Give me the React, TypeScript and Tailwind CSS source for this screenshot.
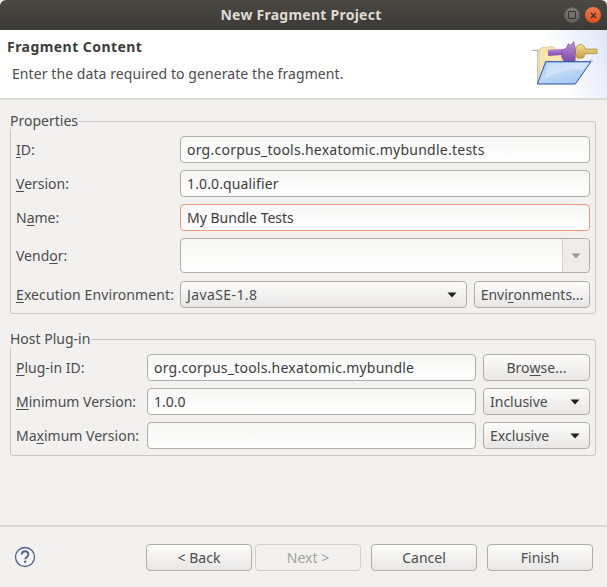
const font = "font-['Noto_Sans','Liberation_Sans',sans-serif]";

function U({ children }: { children: React.ReactNode }) {
  return <span className="underline underline-offset-2 decoration-1">{children}</span>;
}

function Label({ children, w }: { children: React.ReactNode; w: string }) {
  return <div className={`${w} shrink-0 whitespace-nowrap text-[#4c4c4c]`}>{children}</div>;
}

function Input({ value, focus, className = "" }: { value?: string; focus?: boolean; className?: string }) {
  return (
    <div
      className={`flex h-[27px] min-w-0 flex-1 items-center rounded-[4px] border bg-gradient-to-b from-[#f6f6f5] to-white px-[6px] text-[#3d3d3d] ${
        focus ? "border-[#ee9a78]" : "border-[#b0aeaa]"
      } ${className}`}
    >
      {value}
    </div>
  );
}

function Btn({ children, className = "", disabled }: { children: React.ReactNode; className?: string; disabled?: boolean }) {
  return (
    <div
      className={`flex h-[27px] items-center justify-center rounded-[4px] border ${
        disabled
          ? "border-[#d3d1ce] bg-[#f2f1f0] text-[#a3a3a1]"
          : "border-[#b0aeaa] bg-gradient-to-b from-[#fcfcfb] to-[#e8e7e5] text-[#4c4c4c]"
      } ${className}`}
    >
      {children}
    </div>
  );
}

function Caret() {
  return (
    <svg width="10" height="6" viewBox="0 0 10 6" className="shrink-0">
      <path d="M0.5 0.5h9L5 5.5z" fill="#1f1f1f" />
    </svg>
  );
}

function Combo({ text, className = "", textClass = "" }: { text: string; className?: string; textClass?: string }) {
  return (
    <Btn className={`justify-between! pl-[6px] pr-[9px] ${className}`}>
      <span className={textClass}>{text}</span>
      <Caret />
    </Btn>
  );
}

function Group({ title, className = "", children }: { title: string; className?: string; children: React.ReactNode }) {
  return (
    <div className={`relative mr-[11px] ml-[10px] rounded-[3px] border border-[#c9c7c3] px-[5px] ${className}`}>
      <div className="absolute -top-[10px] -left-[2px] bg-[#f2f1f0] px-px leading-[17px] text-[#4c4c4c]">{title}</div>
      {children}
    </div>
  );
}

function WizardIcon() {
  return (
    <svg width="82" height="65" viewBox="0 0 246 195">
      <defs>
        <linearGradient id="fb" x1="0.2" y1="0" x2="0.8" y2="1">
          <stop offset="0" stopColor="#9cc6ef" />
          <stop offset="0.45" stopColor="#c0dbf6" />
          <stop offset="1" stopColor="#9ec6ee" />
        </linearGradient>
        <linearGradient id="bk" x1="0" y1="0" x2="0" y2="1">
          <stop offset="0" stopColor="#f8e5a8" />
          <stop offset="1" stopColor="#f5e4bf" />
        </linearGradient>
        <linearGradient id="pl" x1="0" y1="0" x2="0" y2="1">
          <stop offset="0" stopColor="#bd8fd6" />
          <stop offset="1" stopColor="#7f4aa6" />
        </linearGradient>
        <linearGradient id="go" x1="0" y1="0" x2="0" y2="1">
          <stop offset="0" stopColor="#f7e3a0" />
          <stop offset="1" stopColor="#c99c3a" />
        </linearGradient>
      </defs>
      <path d="M20 46h24" stroke="#a6a6a6" strokeWidth="3" />
      <path d="M38 46v100" stroke="#b4b4b4" strokeWidth="3" />
      <path d="M42 148V50q0-10 10-12l26-3q10 0 16 8l6 8h60v30H64L42 148z" fill="url(#bk)" stroke="#d6c596" strokeWidth="2.5" />
      <path d="M68 44l44-3 4 18-46 4z" fill="url(#pl)" />
      <path d="M110 46l14-6 6-14 8 5 8-11 6 24-2 36h-32l-8-14z" fill="url(#pl)" stroke="#7f4aa6" strokeWidth="2" />
      <path d="M152 40q4-12 16-12 10 0 12 14h36v14h-36q-2 14-12 14-14 0-16-10l6-10z" fill="url(#go)" stroke="#a98a35" strokeWidth="2" />
      <path d="M62 80h136l-47 67H37z" fill="url(#fb)" stroke="#2c4fa6" strokeWidth="3" strokeLinejoin="round" />
      <path d="M66 84h122l-14 20c-38-6-84 6-112 28z" fill="#e3effb" opacity="0.55" />
      <path d="M196 74l8 6" stroke="#a6a6a6" strokeWidth="2.5" />
    </svg>
  );
}

export default function App() {
  return (
    <div className={`flex h-[587px] w-[607px] flex-col overflow-hidden bg-[#f2f1f0] text-[14px] leading-[20px] ${font}`}>
      {/* title bar */}
      <div className="relative flex h-[30px] shrink-0 items-center justify-center rounded-t-[6px] bg-gradient-to-b from-[#4a4943] to-[#3b3a36] pr-[5px] text-[14px] font-bold tracking-[0.25px] text-[#dfdbd2]">
        New Fragment Project
        <div className="absolute top-[7px] right-[6px] flex items-center gap-[5px]">
          <div className="flex h-[16px] w-[16px] items-center justify-center rounded-full border border-[#5d5c57] bg-gradient-to-b from-[#7c7b76] to-[#63625d]">
            <div className="h-[8px] w-[8px] rounded-[1px] border border-[#35342f]" />
          </div>
          <div className="flex h-[16px] w-[16px] items-center justify-center rounded-full bg-gradient-to-b from-[#f2784c] to-[#d9501f]">
            <svg width="7" height="7" viewBox="0 0 7 7">
              <path d="M1 1l5 5M6 1l-5 5" stroke="#4a2a1c" strokeWidth="1.2" />
            </svg>
          </div>
        </div>
      </div>

      {/* header banner */}
      <div className="flex h-[68px] shrink-0 justify-between bg-white">
        <div className="pt-[7px]">
          <div className="pl-[7px] leading-[20px] font-bold tracking-[0.45px] text-[#3d3d3d]">Fragment Content</div>
          <div className="pt-[7px] pl-[12px] tracking-[0.08px] text-[#4c4c4c]">Enter the data required to generate the fragment.</div>
        </div>
        <div className="w-[82px] bg-[linear-gradient(250deg,#dfe6f6_0%,#ffffff_60%)] pt-[5px]">
          <WizardIcon />
        </div>
      </div>
      <div className="h-[2px] shrink-0 bg-[#dcdad6]" />

      {/* body */}
      <div className="flex flex-1 flex-col pt-[21px]">
        <Group title="Properties" className="pt-[14px] pb-[5px]">
          <div className="flex flex-col gap-[7px]">
            <div className="flex items-center">
              <Label w="w-[164px]"><U>I</U>D:</Label>
              <Input value="org.corpus_tools.hexatomic.mybundle.tests" className="tracking-[0.25px]" />
            </div>
            <div className="flex items-center">
              <Label w="w-[164px]"><U>V</U>ersion:</Label>
              <Input value="1.0.0.qualifier" className="tracking-[0.13px]" />
            </div>
            <div className="flex items-center">
              <Label w="w-[164px]">N<U>a</U>me:</Label>
              <Input value="My Bundle Tests" focus />
            </div>
            <div className="flex items-center">
              <Label w="w-[164px]">Vend<U>o</U>r:</Label>
              <div className="mb-px flex h-[35px] flex-1 rounded-[4px] border border-[#b0aeaa] bg-gradient-to-b from-[#f6f6f5] to-white">
                <div className="flex-1" />
                <div className="flex w-[27px] items-center justify-center rounded-r-[4px] border-l border-[#d3d1ce] bg-[#eeedeb]">
                  <svg width="10" height="6" viewBox="0 0 10 6"><path d="M0.5 0.5h9L5 5.5z" fill="#9a9a98" /></svg>
                </div>
              </div>
            </div>
            <div className="flex items-center">
              <Label w="w-[164px]"><span className="tracking-[0.1px]"><U>E</U>xecution Environment:</span></Label>
              <div className="flex flex-1 gap-[7px]">
                <Combo text="JavaSE-1.8" className="flex-1" textClass="tracking-[0.4px]" />
                <Btn className="w-[116px]">Envi<U>r</U>onments...</Btn>
              </div>
            </div>
          </div>
        </Group>

        <Group title="Host Plug-in" className="mt-[25px] pt-[14px] pb-[6px]">
          <div className="flex flex-col gap-[7px]">
            <div className="flex items-center">
              <Label w="w-[131px]"><U>P</U>lug-in ID:</Label>
              <Input value="org.corpus_tools.hexatomic.mybundle" className="tracking-[0.23px]" />
              <Btn className="ml-[7px] w-[107px]">Bro<U>w</U>se...</Btn>
            </div>
            <div className="flex items-center">
              <Label w="w-[131px]"><U>M</U>inimum Version:</Label>
              <Input value="1.0.0" />
              <Combo text="Inclusive" className="ml-[7px] w-[107px]" />
            </div>
            <div className="flex items-center">
              <Label w="w-[131px]">Ma<U>x</U>imum Version:</Label>
              <Input />
              <Combo text="Exclusive" className="ml-[7px] w-[107px]" />
            </div>
          </div>
        </Group>

        <div className="flex-1" />
        <div className="h-[2px] shrink-0 bg-[#dcdad6]" />
        <div className="flex h-[60px] shrink-0 items-center pr-[14px] pl-[14px]">
          <svg width="22" height="22" viewBox="0 0 22 22">
            <circle cx="11" cy="11" r="9.5" fill="#f6f6f8" stroke="#4f6188" strokeWidth="1.3" />
            <path d="M7.8 8.6c0-4.4 6.6-4.4 6.6-.3 0 2.6-3.1 2.6-3.1 5" fill="none" stroke="#4f6188" strokeWidth="1.9" />
            <circle cx="11.2" cy="15.8" r="1.2" fill="#4f6188" />
          </svg>
          <div className="flex-1" />
          <Btn className="w-[106px] pt-px">&lt; Back</Btn>
          <Btn disabled className="ml-[3px] w-[106px] pt-px">Next &gt;</Btn>
          <Btn className="ml-[10px] w-[106px] pt-px">Cancel</Btn>
          <Btn className="ml-[10px] w-[106px] pt-px">Finish</Btn>
        </div>
      </div>
    </div>
  );
}
